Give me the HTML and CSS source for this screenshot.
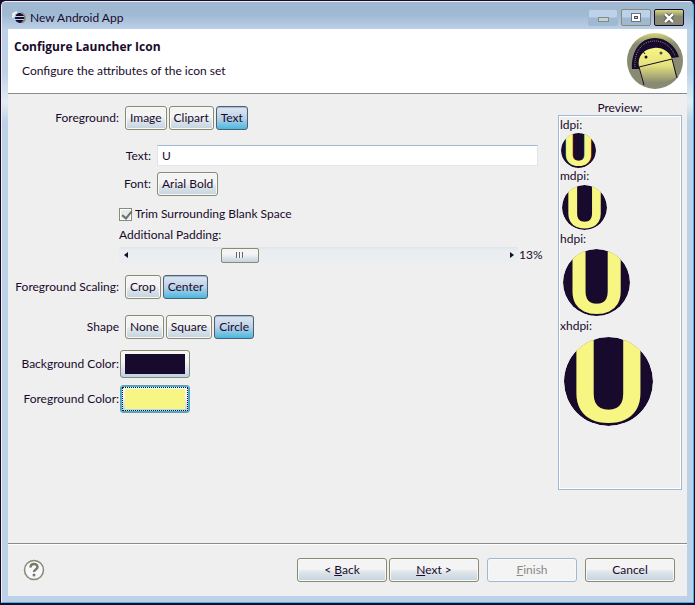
FILE: index.html
```html
<!DOCTYPE html>
<html lang="en">
<head>
<meta charset="utf-8">
<title>New Android App</title>
<link rel="stylesheet" href="styles.css">
</head>
<body>
<div class="window">
  <div class="titlebar">
    <svg class="app-icon" viewBox="0 0 14 14" aria-hidden="true">
      <circle cx="8" cy="7" r="5" fill="#180a2c"/>
      <path d="M0 3.500 5 1M0 6.500 3 4" stroke="#efefef" stroke-width="2"/>
      <path d="M3 5.500h9M2 8.500h10" stroke="#bdd1e8" stroke-width="1"/>
      <path d="M9 2a5 5 0 0 1 1 9.500" fill="none" stroke="#888a72" stroke-width="1.500"/>
    </svg>
    <span class="title">New Android App</span>
    <div class="caption-buttons">
      <button class="caption caption-off" type="button" aria-label="Minimize" disabled>
        <svg viewBox="0 0 12 10"><rect x="1.500" y="4.500" width="10" height="4" fill="#bdd1e8" stroke="#888a72"/></svg>
      </button>
      <button class="caption" type="button" aria-label="Maximize">
        <svg viewBox="0 0 12 10"><rect x="1.500" y=".5" width="9" height="8" fill="#fff" stroke="#6c7380"/><rect x="4.500" y="3.500" width="3" height="2" fill="#bdd1e8" stroke="#50505c"/></svg>
      </button>
      <button class="caption caption-close" type="button" aria-label="Close">
        <svg viewBox="0 0 12 10"><path d="M2 1l8 8M10 1 2 9" stroke="#3c3848" stroke-width="4"/><path d="M2 1l8 8M10 1 2 9" stroke="#fff" stroke-width="2.500"/></svg>
      </button>
    </div>
  </div>

  <div class="dialog">
    <header class="header">
      <div>
        <h1>Configure Launcher Icon</h1>
        <p>Configure the attributes of the icon set</p>
      </div>
      <svg class="banner" viewBox="0 0 56 56" aria-hidden="true">
        <defs>
          <linearGradient id="disc" x1="0" y1="0" x2="0" y2="1">
            <stop offset="0" stop-color="#d4d47b"/><stop offset=".2" stop-color="#888a72"/><stop offset="1" stop-color="#888a72"/>
          </linearGradient>
          <linearGradient id="robot" x1="0" y1="0" x2="0" y2="1">
            <stop offset="0" stop-color="#f8f682"/><stop offset=".5" stop-color="#e4e27e"/><stop offset="1" stop-color="#888a72"/>
          </linearGradient>
        </defs>
        <circle cx="28" cy="28" r="28" fill="url(#disc)"/>
        <path d="M5 36C4 20 12 5 28 5c12 0 21 9 24 19l-7 1-4 4-28 7z" fill="#180a2c"/>
        <path d="M8 34C7 20 14 8 28 8c10 0 17 7 20 15" fill="none" stroke="#888a72" stroke-dasharray="1 1"/>
        <path d="M12 34c-2-10 4-18 15-19 8-1 15 3 18 11l4 18c-8 6-25 7-34 5z" fill="url(#robot)"/>
        <path d="M12 34 45 26M12 34l5 18M45 26l5 19M15 17l3 4M34 11l-1 4" stroke="#180a2c" fill="none"/>
        <circle cx="19" cy="24" r="1.500" fill="#180a2c"/>
        <circle cx="34" cy="20" r="1.500" fill="#50484c"/>
      </svg>
    </header>

    <main class="main">
      <form class="form" id="icon-form">
        <div class="row">
          <span class="row-label" id="fg-label">Foreground:</span>
          <div class="toggles" role="group" aria-labelledby="fg-label">
            <button type="button" class="btn" aria-pressed="false">Image</button>
            <button type="button" class="btn" aria-pressed="false">Clipart</button>
            <button type="button" class="btn" aria-pressed="true">Text</button>
          </div>
        </div>

        <div class="details">
          <div class="field">
            <label for="text">Text:</label>
            <input id="text" class="textbox" type="text" value="U">
          </div>
          <div class="field">
            <label for="font">Font:</label>
            <button id="font" type="button" class="btn">Arial Bold</button>
          </div>
          <label class="check">
            <input type="checkbox" checked>
            Trim Surrounding Blank Space
          </label>
          <label class="padding-label" for="padding">Additional Padding:</label>
          <div class="scroll">
            <div class="scrollbar">
              <svg viewBox="0 0 16 16" aria-hidden="true"><path d="M9 5v6L5 8z" fill="#180a2c"/></svg>
              <input id="padding" type="range" min="0" max="50" value="13">
              <svg viewBox="0 0 16 16" aria-hidden="true"><path d="M8 5v6l4-3z" fill="#180a2c"/></svg>
            </div>
            <output for="padding">13%</output>
          </div>
        </div>

        <div class="row">
          <span class="row-label" id="scale-label">Foreground Scaling:</span>
          <div class="toggles" role="group" aria-labelledby="scale-label">
            <button type="button" class="btn" aria-pressed="false">Crop</button>
            <button type="button" class="btn" aria-pressed="true">Center</button>
          </div>
        </div>
        <div class="row row-shape">
          <span class="row-label" id="shape-label">Shape</span>
          <div class="toggles" role="group" aria-labelledby="shape-label">
            <button type="button" class="btn" aria-pressed="false">None</button>
            <button type="button" class="btn" aria-pressed="false">Square</button>
            <button type="button" class="btn" aria-pressed="true">Circle</button>
          </div>
        </div>
        <div class="colors">
          <div class="row">
            <label class="row-label" for="bg-color">Background Color:</label>
            <button id="bg-color" type="button" class="color"><span class="swatch swatch-dark"></span></button>
          </div>
          <div class="row">
            <label class="row-label" for="fg-color">Foreground Color:</label>
            <button id="fg-color" type="button" class="color color-focused"><span class="swatch swatch-yellow"></span></button>
          </div>
        </div>
      </form>

      <aside class="preview">
        <h2>Preview:</h2>
        <div class="preview-box">
          <div class="size size-ldpi"><span>ldpi:</span>
            <svg viewBox="0 0 88 88"><defs><clipPath id="round"><circle cx="44" cy="44" r="44"/></clipPath></defs><g clip-path="url(#round)"><circle cx="44" cy="44" r="44" class="ink"/><text x="44" y="84">U</text></g></svg>
          </div>
          <div class="size size-mdpi"><span>mdpi:</span>
            <svg viewBox="0 0 88 88"><g clip-path="url(#round)"><circle cx="44" cy="44" r="44" class="ink"/><text x="44" y="84">U</text></g></svg>
          </div>
          <div class="size size-hdpi"><span>hdpi:</span>
            <svg viewBox="0 0 88 88"><g clip-path="url(#round)"><circle cx="44" cy="44" r="44" class="ink"/><text x="44" y="84">U</text></g></svg>
          </div>
          <div class="size size-xhdpi"><span>xhdpi:</span>
            <svg viewBox="0 0 88 88"><g clip-path="url(#round)"><circle cx="44" cy="44" r="44" class="ink"/><text x="44" y="84">U</text></g></svg>
          </div>
        </div>
      </aside>
    </main>

    <footer class="footer">
      <button class="help" type="button" aria-label="Help">
        <svg viewBox="0 0 22 22"><circle cx="11" cy="11" r="9.500" fill="#f6f8fa" stroke="#888a72" stroke-width="1.500"/><path d="M7.500 8.500C7.500 4 14.500 4 14.500 8c0 2.500-3.500 2.500-3.500 5" fill="none" stroke="#777a6c" stroke-width="2.500"/><circle cx="11" cy="16" r="1.500" fill="#777a6c"/></svg>
      </button>
      <div class="pair">
        <button type="button" class="btn wide">&lt; <u>B</u>ack</button>
        <button type="button" class="btn wide"><u>N</u>ext &gt;</button>
      </div>
      <button type="button" class="btn wide" disabled><u>F</u>inish</button>
      <button type="button" class="btn wide">Cancel</button>
    </footer>
  </div>
</div>
</body>
</html>
```
FILE: styles.css
```css
* {
  box-sizing: border-box;
}

body {
  margin: 0;
  background: #180a2c;
  color: #180a2c;
  font: 12px/16px Lato, "Open Sans", sans-serif;
}

button,
input {
  font: inherit;
  color: inherit;
  margin: 0;
}

svg {
  display: block;
}

.window {
  display: flex;
  flex-direction: column;
  min-height: calc(100vh - 3px);
  margin: 1px 1px 2px;
  padding: 0 6px;
  border: 1px solid #38b8e0;
  border-top-color: #efefef;
  border-left-color: #efefef;
  border-radius: 5px 5px 0 0;
  background: linear-gradient(#9fb9d3, #9fb9d3 12px, #bdd1e8 28px, #bdd1e8 70px, #e4ecf4 100px, #bdd1e8 120px);
}

.titlebar {
  display: flex;
  align-items: center;
  height: 27px;
  padding: 4px 3px 0 4px;
}

.app-icon {
  width: 14px;
  height: 14px;
  margin-right: 4px;
}

.title {
  flex: 1;
}

.caption-buttons {
  display: flex;
  gap: 3px;
}

.caption {
  display: grid;
  place-items: center;
  width: 30px;
  height: 17px;
  padding: 0;
  border: 1px solid #888a72;
  border-radius: 2px;
  background: linear-gradient(#bdd1e8 45%, #9fb9d3 55%);
}

.caption svg {
  width: 12px;
  height: 10px;
}

.caption-off {
  border-color: #9fb9d3;
}

.caption-close {
  border-color: #180a2c;
  background: linear-gradient(#d8d67c, #888a72 45%);
}

.dialog {
  display: flex;
  flex: 1;
  flex-direction: column;
  margin-bottom: 6px;
  background: #efefef;
}

.header {
  display: flex;
  justify-content: space-between;
  height: 65px;
  padding: 4px 4px 0 6px;
  border-bottom: 1px solid #888c8c;
  background: #fff;
}

.header h1 {
  margin: 6px 0 8px;
  font: bold 12px/16px "Open Sans", sans-serif;
}

.header p {
  margin: 0 0 0 8px;
}

.banner {
  width: 56px;
  height: 56px;
}

.main {
  display: flex;
  flex: 1;
  padding: 6px 5px 0 0;
}

.form {
  flex: 1;
  padding-top: 6px;
}

.row {
  display: flex;
  align-items: center;
}

.row-label {
  width: 111px;
  text-align: right;
  white-space: nowrap;
}

.toggles {
  display: flex;
  gap: 2px;
  padding-left: 6px;
}

.btn {
  height: 24px;
  padding: 0 4px;
  border: 1px solid #888a72;
  border-radius: 3px;
  background: linear-gradient(#f4f4f4 45%, #dfe5ea 60%, #c3d3e0);
  box-shadow: inset 0 0 0 1px #f8f8f8;
  white-space: nowrap;
}

.btn[aria-pressed="true"] {
  border-color: #4f5f70;
  background: linear-gradient(#dfe8f0, #bdd1e8 50%, #48b8e0);
  box-shadow: inset 0 1px 1px #9fb9d3;
}

.btn:disabled {
  border-color: #9fb9d3;
  background: #f4f4f4;
  color: #888a84;
}

.details {
  margin: 15px 14px 12px 111px;
}

.field {
  display: flex;
  align-items: center;
  gap: 6px;
  margin-bottom: 6px;
  padding-right: 6px;
}

.field label {
  width: 32px;
  text-align: right;
}

.textbox {
  flex: 1;
  min-width: 0;
  height: 21px;
  padding: 0 4px;
  border: 1px solid #dde6ee;
  border-top-color: #9fb9d3;
  background: #fff;
}

.check {
  display: flex;
  align-items: center;
  gap: 3px;
  margin-top: 10px;
}

.check input {
  appearance: none;
  width: 13px;
  height: 13px;
  border: 1px solid #888a72;
  background: #e4eaf0;
  box-shadow: inset 0 0 0 1px #fff;
}

.check input:checked::before {
  content: "";
  display: block;
  width: 4px;
  height: 8px;
  margin: 0 0 0 4px;
  border: solid #6c7268;
  border-width: 0 2px 2px 0;
  transform: rotate(40deg);
}

.padding-label {
  display: block;
  margin: 5px 0 4px;
}

.scroll {
  display: flex;
  align-items: center;
  gap: 1px;
}

.scrollbar {
  display: flex;
  flex: 1;
  height: 16px;
  background: linear-gradient(#dde6ee, #ebeef0 4px);
}

.scrollbar svg {
  flex: none;
  width: 16px;
  height: 16px;
}

.scrollbar input {
  appearance: none;
  flex: 1;
  min-width: 0;
  height: 16px;
  background: none;
}

.scrollbar input::-webkit-slider-thumb {
  appearance: none;
  width: 38px;
  height: 15px;
  border: 1px solid #888a72;
  border-radius: 2px;
  background:
    repeating-linear-gradient(90deg, #606468 0 1px, #f4f4f4 1px 3px) center 3px / 8px 6px no-repeat,
    linear-gradient(#f4f4f4 40%, #c3d3e0);
}

.scroll output {
  width: 25px;
}

.row-shape {
  margin-top: 16px;
}

.colors {
  display: grid;
  gap: 7px;
  margin-top: 11px;
}

.color {
  width: 70px;
  height: 28px;
  margin-left: 1px;
  padding: 3px 4px;
  border: 1px solid #888a72;
  border-radius: 3px;
  background: linear-gradient(#f6f6f6 40%, #bdd1e8);
}

.color-focused {
  border-color: #6a9aa8;
  box-shadow: inset 0 0 0 1px #38b8e0;
  outline: 1px dotted #180a2c;
  outline-offset: -3px;
}

.swatch {
  display: block;
  height: 20px;
}

.swatch-dark {
  background: #180a2c;
}

.swatch-yellow {
  background: #f8f682;
}

.preview {
  width: 124px;
}

.preview h2 {
  margin: 0;
  font-size: 12px;
  font-weight: 400;
  line-height: 15px;
  text-align: center;
}

.preview-box {
  min-height: 375px;
  padding: 1px;
  border: 1px solid #9fb9d3;
  box-shadow: inset 0 0 0 1px #fff;
}

.size span {
  display: block;
}

.size text {
  fill: #f8f682;
  font: bold 116px Roboto, sans-serif;
  text-anchor: middle;
}

.ink {
  fill: #180a2c;
}

.size-ldpi svg {
  width: 35px;
  height: 35px;
  margin-left: 1px;
}

.size-mdpi svg {
  width: 45px;
  height: 45px;
  margin: 1px 0 1px 2px;
}

.size-hdpi svg {
  width: 67px;
  height: 67px;
  margin: 2px 0 2px 3px;
}

.size-xhdpi svg {
  width: 89px;
  height: 89px;
  margin: 3px 0 0 4px;
}

.footer {
  display: flex;
  align-items: center;
  gap: 8px;
  height: 53px;
  padding: 0 12px 0 15px;
  border-top: 1px solid #888c8c;
  box-shadow: inset 0 1px #fff;
}

.help {
  width: 22px;
  height: 22px;
  margin-right: auto;
  padding: 0;
  border: 0;
  background: none;
}

.pair {
  display: flex;
  gap: 2px;
}

.wide {
  width: 90px;
}
```
